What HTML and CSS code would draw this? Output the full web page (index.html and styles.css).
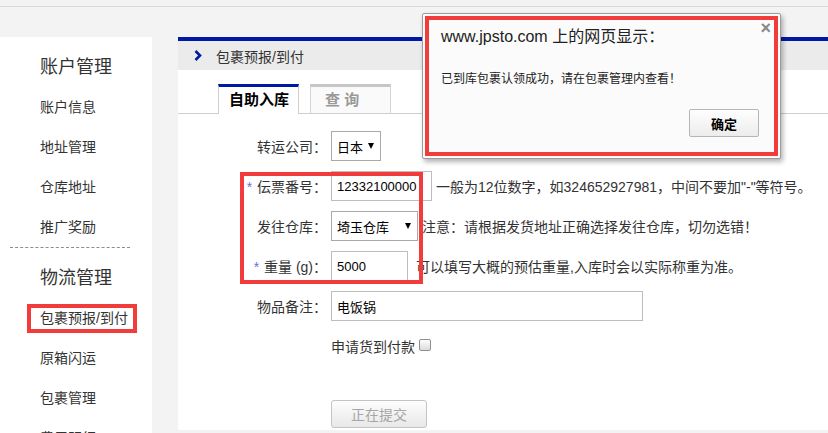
FILE: index.html
```html
<!DOCTYPE html>
<html lang="zh-CN">
<head>
    <meta charset="UTF-8">
    <title>包裹预报/到付</title>
    <link rel="stylesheet" href="styles.css">
</head>
<body>
    <div class="topbar"></div>

    <div class="page">
        <div class="sidebar">
            <h3 class="menu-title">账户管理</h3>
            <a class="menu-item">账户信息</a>
            <a class="menu-item">地址管理</a>
            <a class="menu-item">仓库地址</a>
            <a class="menu-item">推广奖励</a>
            <div class="menu-divider"></div>
            <h3 class="menu-title second">物流管理</h3>
            <a class="menu-item"><span class="marked">包裹预报/到付</span></a>
            <a class="menu-item">原箱闪运</a>
            <a class="menu-item">包裹管理</a>
            <a class="menu-item">费用明细</a>
        </div>

        <div class="main">
            <div class="crumb">
                <svg class="crumb-arrow" width="8" height="11" viewBox="0 0 8 11">
                    <path d="M1.5 1 L6 5.5 L1.5 10" fill="none" stroke="#0019a5" stroke-width="2.6"/>
                </svg>
                <span>包裹预报/到付</span>
            </div>

            <div class="panel">
                <div class="tabs">
                    <div class="tab active">自助入库</div>
                    <div class="tab muted">查 询</div>
                </div>

                <div class="form">
                    <div class="mark-box"></div>

                    <div class="row">
                        <span class="label">转运公司：</span>
                        <div class="select w-company">日本<i class="caret"></i></div>
                    </div>
                    <div class="row">
                        <span class="label"><em class="req">*</em> 伝票番号：</span>
                        <input class="input w-code" type="text" value="12332100000">
                        <span class="hint">一般为12位数字，如324652927981，中间不要加"-"等符号。</span>
                    </div>
                    <div class="row">
                        <span class="label">发往仓库：</span>
                        <div class="select w-store">埼玉仓库<i class="caret"></i></div>
                        <span class="hint">注意：请根据发货地址正确选择发往仓库，切勿选错！</span>
                    </div>
                    <div class="row">
                        <span class="label"><em class="req">*</em> 重量 (g)：</span>
                        <input class="input w-weight" type="text" value="5000">
                        <span class="hint wide">可以填写大概的预估重量,入库时会以实际称重为准。</span>
                    </div>
                    <div class="row">
                        <span class="label">物品备注：</span>
                        <input class="input w-note" type="text" value="电饭锅">
                    </div>
                    <div class="row">
                        <span class="label"></span>
                        <span>申请货到付款</span>
                        <input class="check" type="checkbox">
                    </div>
                    <button class="submit" type="button" disabled>正在提交</button>
                </div>
            </div>
        </div>
    </div>

    <div class="dialog">
        <div class="dialog-mark">
            <div class="dialog-head">
                <span class="dialog-title">www.jpsto.com 上的网页显示：</span>
                <span class="dialog-close">×</span>
            </div>
            <p class="dialog-msg">已到库包裹认领成功，请在包裹管理内查看！</p>
            <div class="dialog-actions">
                <button class="dialog-btn" type="button">确定</button>
            </div>
        </div>
    </div>
</body>
</html>
```

FILE: styles.css
```css
* {
    box-sizing: border-box;
}

body {
    margin: 0;
    height: 433px;
    overflow: hidden;
    background: #f3f3f3;
    font-family: "Liberation Sans", "Noto Sans CJK SC", sans-serif;
    font-size: 14px;
    color: #333;
}

.topbar {
    height: 7px;
    border-bottom: 1px solid #d9d9d9;
}

.page {
    display: flex;
    align-items: flex-start;
    gap: 26px;
    margin-top: 30px;
}

/* left menu */
.sidebar {
    width: 152px;
    min-height: 420px;
    padding-top: 10px;
    background: #fff;
}

.menu-title {
    margin: 0;
    padding-left: 40px;
    font-size: 18px;
    font-weight: normal;
    line-height: 40px;
    color: #333;
}

.menu-title.second {
    margin-top: 10px;
}

.menu-item {
    display: block;
    padding-left: 40px;
    line-height: 40px;
    color: #333;
}

.menu-divider {
    margin: 0 22px 0 10px;
    border-top: 1px dashed #8c8c8c;
}

.marked {
    display: inline-block;
    margin-left: -13px;
    padding: 0 5px 0 9px;
    line-height: 21px;
    border: 4px solid #f23c3c;
}

/* main column */
.main {
    flex: 1;
    border-top: 4px solid #0019a5;
}

.crumb {
    display: flex;
    align-items: center;
    gap: 14px;
    height: 29px;
    padding-left: 16px;
    background: #ebebeb;
    color: #333;
}

.panel {
    height: 360px;
    padding-top: 14px;
    background: #fff;
}

.tabs {
    display: flex;
    align-items: flex-start;
    gap: 11px;
    height: 30px;
    padding-left: 40px;
    border-bottom: 1px solid #cfcfcf;
}

.tab {
    width: 81px;
    height: 29px;
    padding-left: 10px;
    border: 1px solid #cfcfcf;
    border-top-width: 3px;
    border-bottom: none;
    font-size: 15px;
    font-weight: bold;
    line-height: 25px;
}

.tab.active {
    height: 30px;
    border-top-color: #0019a5;
    background: #fff;
    color: #000;
}

.tab.muted {
    padding-left: 14px;
    border-color: #d4d4d4;
    border-top-color: #c6c6c6;
    background: #fafafa;
    color: #999;
}

/* form */
.form {
    position: relative;
    display: flex;
    flex-direction: column;
    gap: 10px;
    margin-top: 17px;
}

.row {
    display: flex;
    align-items: center;
    height: 30px;
}

.label {
    width: 149px;
    margin-right: 4px;
    text-align: right;
    color: #333;
}

.req {
    margin-right: 1px;
    font-style: normal;
    color: #6f6fe0;
}

.select {
    display: flex;
    align-items: center;
    justify-content: space-between;
    height: 30px;
    padding: 0 6px 0 5px;
    border: 1px solid #a9a9a9;
    font-size: 13px;
    color: #000;
}

.caret {
    width: 0;
    height: 0;
    border-left: 3px solid transparent;
    border-right: 3px solid transparent;
    border-top: 6px solid #000;
}

.w-company { width: 50px; }
.w-store { width: 87px; }

.input {
    height: 30px;
    padding: 0 5px;
    border: 1px solid #bdbdbd;
    font: inherit;
    font-size: 13px;
    color: #000;
    outline: none;
}

.w-code { width: 101px; }
.w-weight { width: 77px; }
.w-note { width: 312px; }

.hint {
    margin-left: 4px;
    white-space: nowrap;
    color: #333;
}

.hint.wide {
    margin-left: 8px;
}

.check {
    -webkit-appearance: none;
    appearance: none;
    width: 12px;
    height: 12px;
    margin: 0 0 3px 4px;
    border: 1px solid #8f8f8f;
    border-radius: 2px;
    background: linear-gradient(#fdfdfd, #dcdcdc);
}

.submit {
    align-self: flex-start;
    width: 96px;
    height: 28px;
    margin: 29px 0 0 153px;
    border: 1px solid #c4c4c4;
    border-radius: 3px;
    background: linear-gradient(#fdfdfd, #e8e8e8);
    font: inherit;
    font-size: 14px;
    color: #a6a6a6;
}

/* annotation over the three checked fields */
.mark-box {
    position: absolute;
    left: 62px;
    top: 41px;
    width: 183px;
    height: 112px;
    border: 4px solid #f23c3c;
    pointer-events: none;
}

/* browser alert */
.dialog {
    position: absolute;
    left: 422px;
    top: 13px;
    width: 359px;
    height: 146px;
    padding: 2px;
    background: #fbfbfb;
    border: 1px solid #9c9c9c;
    border-radius: 2px;
    box-shadow: 2px 3px 5px rgba(0, 0, 0, 0.3);
}

.dialog-mark {
    height: 100%;
    padding: 6px 15px 0 12px;
    border: 4px solid #f23c3c;
}

.dialog-head {
    display: flex;
    justify-content: space-between;
    align-items: flex-start;
}

.dialog-title {
    font-size: 16px;
    line-height: 22px;
    color: #222;
}

.dialog-close {
    margin: -5px -12px 0 0;
    font-size: 18px;
    font-weight: bold;
    line-height: 14px;
    color: #888;
}

.dialog-msg {
    margin: 22px 0 0;
    font-size: 12px;
    line-height: 18px;
    color: #222;
}

.dialog-actions {
    display: flex;
    justify-content: flex-end;
    margin-top: 21px;
}

.dialog-btn {
    width: 70px;
    height: 28px;
    border: 1px solid #b5b5b5;
    border-radius: 2px;
    background: linear-gradient(#fefefe, #ececec);
    font: inherit;
    font-size: 13px;
    font-weight: bold;
    color: #000;
}
```
